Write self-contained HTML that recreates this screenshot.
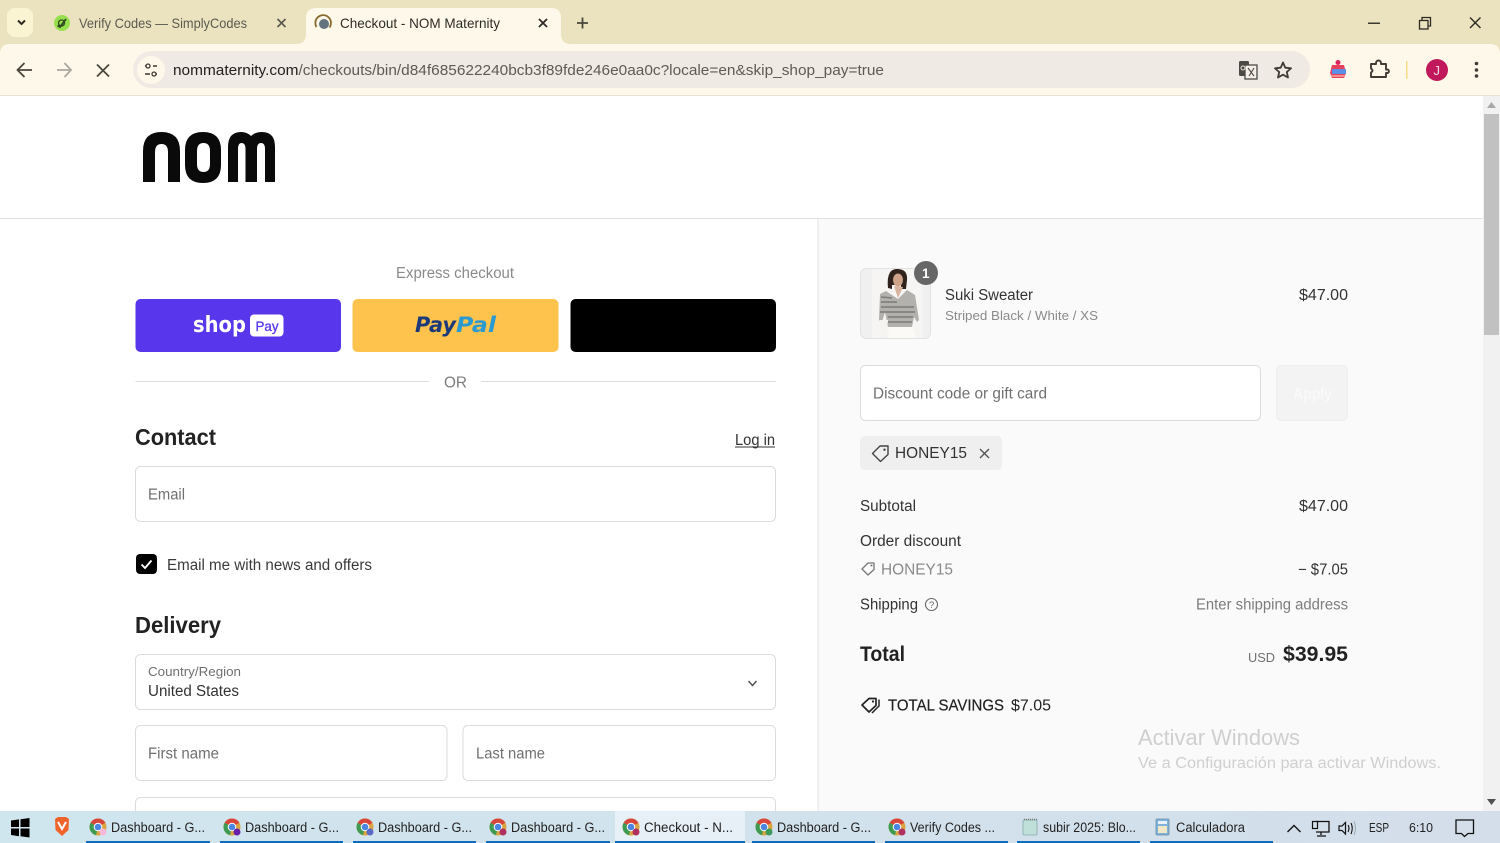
<!DOCTYPE html>
<html><head><meta charset="utf-8"><title>Checkout - NOM Maternity</title>
<style>
html,body{margin:0;padding:0;width:1500px;height:843px;overflow:hidden;background:#fff}
svg{display:block;filter:blur(.3px)}
text{font-family:"Liberation Sans",sans-serif;font-size:15px;fill:#333;white-space:pre}
</style></head><body>
<svg width="1500" height="843" viewBox="0 0 1500 843" xmlns="http://www.w3.org/2000/svg">
<defs>
<linearGradient id="tb" x1="0" x2="1" y1="0" y2="0"><stop offset="0" stop-color="#d0e6ef"/><stop offset="1" stop-color="#d3deea"/></linearGradient>
<g id="chrome"><circle cx="9" cy="9" r="8.5" fill="#d9a441"/><path d="M9 9L1.6 4.8A8.5 8.5 0 0 1 16.4 4.8Z" fill="#d8453a"/><path d="M9 9L1.6 4.8A8.5 8.5 0 0 0 7 17.3Z" fill="#3f9a52"/><circle cx="9" cy="9" r="4.300" fill="#fff"/><circle cx="9" cy="9" r="3.300" fill="#4a86e0"/></g>
</defs>

<!-- browser chrome -->
<rect width="1500" height="96" fill="#ebe3bf"/>
<path d="M0 96V54Q0 44 10 44H1490Q1500 44 1500 54V96Z" fill="#fdf8ea"/>
<rect y="95" width="1500" height="1" fill="#e6e2d8"/>
<rect x="7" y="8" width="26" height="29" rx="8" fill="#fbf4d2"/>
<path d="M18 20.500L21.500 24L25 20.500" fill="none" stroke="#2c2a22" stroke-width="2"/>
<circle cx="62" cy="23" r="8" fill="#97e04d"/>
<path d="M57.500 25.500L60 27L66 19" fill="none" stroke="#2f4a20" stroke-width="1.800"/><circle cx="61.500" cy="23" r="3" fill="none" stroke="#2f4a20" stroke-width="1.300"/>
<text x="79" y="28" textLength="168" lengthAdjust="spacingAndGlyphs" style="font-size:14px;fill:#5c5a50">Verify Codes — SimplyCodes</text>
<path d="M277.500 19L285.500 27M285.500 19L277.500 27" stroke="#59574e" stroke-width="1.600"/>
<path d="M296 44Q306 44 306 34V18Q306 8 316 8H551Q561 8 561 18V34Q561 44 571 44Z" fill="#fdf8ea"/>
<path d="M329.500 27.500A7.800 7.800 0 1 0 316.500 27" fill="none" stroke="#8a6a2c" stroke-width="1.800"/><circle cx="324" cy="24" r="5" fill="#65737e"/>
<text x="340" y="28" textLength="160" lengthAdjust="spacingAndGlyphs" style="font-size:14px;fill:#2e2c26">Checkout - NOM Maternity</text>
<path d="M539 19L547 27M547 19L539 27" stroke="#2e2c26" stroke-width="1.800"/>
<path d="M582.500 17.500V28.500M577 23H588" stroke="#47453c" stroke-width="1.800"/>
<rect x="1368" y="22.500" width="12" height="1.500" fill="#3a382f"/>
<rect x="1419.500" y="20.500" width="8.500" height="8.500" fill="none" stroke="#2c2a22" stroke-width="1.300"/><path d="M1422 20V17.500H1430.500V26H1428" fill="none" stroke="#2c2a22" stroke-width="1.300"/>
<path d="M1470 17.500L1480.500 28M1480.500 17.500L1470 28" stroke="#2c2a22" stroke-width="1.400"/>

<path d="M32 70H18M24.500 63L17.500 70L24.500 77" fill="none" stroke="#48463d" stroke-width="1.800"/>
<path d="M57 70H71M64.500 63L71 70L64.500 77" fill="none" stroke="#aaa89f" stroke-width="1.800"/>
<path d="M97 64.500L109 76.500M109 64.500L97 76.500" stroke="#48463d" stroke-width="1.800"/>
<rect x="133" y="51" width="1177" height="37" rx="18.500" fill="#efeae3"/>
<circle cx="151" cy="70" r="14" fill="#fdf8ea"/>
<path d="M145 66H150M153 66H157M145 74H150M153 74H157" stroke="#3a382f" stroke-width="1.500"/><circle cx="148" cy="66" r="2" fill="#fdf8ea" stroke="#3a382f" stroke-width="1.300"/><circle cx="154" cy="74" r="2" fill="#fdf8ea" stroke="#3a382f" stroke-width="1.300"/>
<text x="173" y="75" textLength="711" lengthAdjust="spacingAndGlyphs" style="font-size:15px;fill:#5d5b54"><tspan fill="#23211c">nommaternity.com</tspan>/checkouts/bin/d84f685622240bcb3f89fde246e0aa0c?locale=en&amp;skip_shop_pay=true</text>
<rect x="1239" y="61" width="10" height="15" rx="1.500" fill="#4b4a44"/><rect x="1245" y="65" width="12" height="14" fill="#f4efe7" stroke="#4b4a44" stroke-width="1.300"/><path d="M1248 68L1254 76M1254 68L1249 76" stroke="#4b4a44" stroke-width="1.100"/><circle cx="1243" cy="68" r="2" fill="none" stroke="#e8e4da" stroke-width="1"/>
<path d="M1283 62.500L1285.300 67.700L1291 68.300L1286.800 72L1288 77.500L1283 74.700L1278 77.500L1279.200 72L1275 68.300L1280.700 67.700Z" fill="none" stroke="#3f3d36" stroke-width="1.800" stroke-linejoin="round"/>
<path d="M1332 65H1344L1346 73L1344 78H1332L1330 73Z" fill="#e8415f"/><rect x="1332" y="69" width="14" height="5" fill="#5b8fe6"/><circle cx="1338" cy="62.500" r="2.500" fill="#e0245e"/><rect x="1331" y="75" width="14" height="2" fill="#f1908b"/>
<path d="M1371 64H1376V63A2.500 2.500 0 0 1 1381 63V64H1386V69.500H1387.500A1.800 1.800 0 0 1 1387.500 73H1386V77H1371V72.500Q1374 70.500 1371 68.500Z" fill="none" stroke="#3f3d36" stroke-width="1.900" stroke-linejoin="round"/>
<rect x="1406" y="61" width="1.500" height="18" fill="#f6dc8a"/>
<circle cx="1437" cy="70" r="11" fill="#c0185a"/>
<text x="1433.500" y="75" style="font-size:13px;fill:#f7d9e4">J</text>
<circle cx="1476.500" cy="63.500" r="1.800" fill="#3f3d36"/><circle cx="1476.500" cy="70" r="1.800" fill="#3f3d36"/><circle cx="1476.500" cy="76" r="1.800" fill="#3f3d36"/>

<!-- page backgrounds -->
<rect x="818" y="219" width="665" height="592" fill="#fafafa"/>
<rect x="0" y="218" width="1483" height="1" fill="#e1e1e1"/>
<rect x="817.500" y="219" width="1" height="592" fill="#e1e1e1"/>
<rect x="1483" y="96" width="17" height="715" fill="#f1f1f1"/>
<rect x="1484" y="114" width="15" height="221" fill="#c1c1c1"/>
<path d="M1491.500 102L1487 108H1496Z" fill="#a8a8a8"/>
<path d="M1491.500 805L1487 799H1496Z" fill="#505050"/>

<!-- logo -->
<path d="M143 182V151Q143 132 161.500 132Q180 132 180 151V182H168V152Q168 144 161.500 144Q155 144 155 152V182Z" fill="#0a0a0a"/>
<path fill-rule="evenodd" d="M185 150Q185 132 203 132Q221 132 221 150V165Q221 183 203 183Q185 183 185 165ZM197 151V164Q197 172 203.500 172Q210 172 210 164V151Q210 143 203.500 143Q197 143 197 151Z" fill="#0a0a0a"/>
<path d="M228 182V147Q228 132 241 132Q247 132 251 136Q255 132 262 132Q275 132 275 147V182H265V149Q265 143 261 143Q257 143 257 149V182H245.500V149Q245.500 143 241.500 143Q238 143 238 149V182Z" fill="#0a0a0a"/>

<!-- express -->
<text x="396" y="278" textLength="118" lengthAdjust="spacingAndGlyphs" style="font-size:15.500px;fill:#8a8a8a">Express checkout</text>
<rect x="135.500" y="299" width="205.500" height="53" rx="5" fill="#5836ec"/>
<rect x="352.500" y="299" width="206" height="53" rx="5" fill="#fec34d"/>
<rect x="570.500" y="299" width="205.500" height="53" rx="5" fill="#000"/>
<text x="193" y="332" textLength="53" lengthAdjust="spacingAndGlyphs" style="font-family:'DejaVu Sans',sans-serif;font-size:22px;font-weight:700;fill:#fff">shop</text>
<rect x="250" y="314.500" width="33.500" height="22" rx="4" fill="#fff"/>
<text x="255.500" y="331" textLength="23" lengthAdjust="spacingAndGlyphs" style="font-size:14px;fill:#5836ec;stroke:#5836ec;stroke-width:.3px">Pay</text>
<text x="415" y="332" textLength="41" lengthAdjust="spacingAndGlyphs" style="font-family:'DejaVu Sans',sans-serif;font-size:21px;font-weight:700;font-style:italic;fill:#1c3a7a">Pay</text>
<text x="456" y="332" textLength="40" lengthAdjust="spacingAndGlyphs" style="font-family:'DejaVu Sans',sans-serif;font-size:21px;font-weight:700;font-style:italic;fill:#2a9ad0">Pal</text>
<rect x="135.500" y="381" width="293.500" height="1" fill="#dedede"/>
<rect x="481" y="381" width="295" height="1" fill="#dedede"/>
<text x="444" y="387.500" textLength="23" lengthAdjust="spacingAndGlyphs" style="font-size:15.500px;fill:#7d7d7d">OR</text>

<!-- contact -->
<text x="135" y="445" textLength="81" lengthAdjust="spacingAndGlyphs" style="font-size:23px;font-weight:700;fill:#222">Contact</text>
<text x="735" y="445" textLength="40" lengthAdjust="spacingAndGlyphs" style="font-size:15.500px;fill:#333">Log in</text>
<rect x="735" y="446.500" width="40" height="1" fill="#333"/>
<rect x="135.500" y="466.500" width="640" height="55" rx="5" fill="#fff" stroke="#dcdcdc"/>
<text x="148" y="499.500" textLength="37" lengthAdjust="spacingAndGlyphs" style="font-size:15.500px;fill:#707070">Email</text>
<rect x="136" y="554" width="21" height="20" rx="4" fill="#000"/>
<path d="M141.500 564.500L145 568L151.500 560.500" fill="none" stroke="#fff" stroke-width="1.800"/>
<text x="167" y="570" textLength="205" lengthAdjust="spacingAndGlyphs" style="font-size:15.500px;fill:#3a3a3a">Email me with news and offers</text>

<!-- delivery -->
<text x="135" y="633" textLength="86" lengthAdjust="spacingAndGlyphs" style="font-size:23px;font-weight:700;fill:#222">Delivery</text>
<rect x="135.500" y="654.500" width="640" height="55" rx="5" fill="#fff" stroke="#dcdcdc"/>
<text x="148" y="676" textLength="93" lengthAdjust="spacingAndGlyphs" style="font-size:13px;fill:#707070">Country/Region</text>
<text x="148" y="696" textLength="91" lengthAdjust="spacingAndGlyphs" style="font-size:15.500px;fill:#333">United States</text>
<path d="M748.500 681L752.500 685.500L756.500 681" fill="none" stroke="#555" stroke-width="1.500"/>
<rect x="135.500" y="725.500" width="311.500" height="55" rx="5" fill="#fff" stroke="#dcdcdc"/>
<text x="148" y="758.500" textLength="71" lengthAdjust="spacingAndGlyphs" style="font-size:15.500px;fill:#707070">First name</text>
<rect x="463" y="725.500" width="312.500" height="55" rx="5" fill="#fff" stroke="#dcdcdc"/>
<text x="476" y="758.500" textLength="69" lengthAdjust="spacingAndGlyphs" style="font-size:15.500px;fill:#707070">Last name</text>
<rect x="135.500" y="797.500" width="640" height="30" rx="5" fill="#fff" stroke="#dcdcdc"/>

<!-- order summary -->
<rect x="860.500" y="268.500" width="70" height="70" rx="6" fill="#f0f0f0" stroke="#e2e2e2"/>
<rect x="872" y="269" width="51" height="69" fill="#f6f5f3"/>
<path d="M886 291L880 294L879 320L882 322L885 312L888 327H912L914 317L917 322L919 320L915 295L907 290L898 299Z" fill="#b3b1ae"/>
<path d="M881 297L892 298M881 302H897M881 307H914M880 312H915M888 317H913M888 322H912" stroke="#7d7b76" stroke-width="1.500"/>
<path d="M880 320H888L886 337H881Z" fill="#f5f4f0"/>
<path d="M889 327H913L916 338H888Z" fill="#fbfaf6"/>
<path d="M888 288Q886 269 897 269Q908 269 907 280L906 289H901V285H892V289Z" fill="#30231e"/>
<ellipse cx="898" cy="280" rx="5" ry="6.500" fill="#cfa38a"/>
<path d="M894 286L898 298L903 287Z" fill="#d8b4a0"/>
<circle cx="926" cy="273" r="12" fill="#666"/>
<text x="922" y="278" style="font-size:13.500px;font-weight:700;fill:#fff">1</text>
<text x="945" y="300" textLength="88" lengthAdjust="spacingAndGlyphs" style="font-size:15.500px;fill:#333">Suki Sweater</text>
<text x="945" y="320" textLength="153" lengthAdjust="spacingAndGlyphs" style="font-size:13px;fill:#8a8a8a">Striped Black / White / XS</text>
<text x="1299" y="300" textLength="49" lengthAdjust="spacingAndGlyphs" style="font-size:15.500px;fill:#333">$47.00</text>

<rect x="860.500" y="365.500" width="400" height="55" rx="5" fill="#fff" stroke="#dcdcdc"/>
<text x="873" y="398.500" textLength="174" lengthAdjust="spacingAndGlyphs" style="font-size:15.500px;fill:#707070">Discount code or gift card</text>
<rect x="1276.500" y="365.500" width="71" height="55" rx="5" fill="#f3f3f3" stroke="#eeeeee"/>
<text x="1293" y="399" textLength="39" lengthAdjust="spacingAndGlyphs" style="font-size:15.500px;font-weight:700;fill:#f9f9f9">Apply</text>

<rect x="860" y="436" width="142" height="34" rx="5" fill="#efefef"/>
<path d="M872.500 453.500L880 446H888V454.500L880.500 461.500Z" fill="none" stroke="#444" stroke-width="1.400" stroke-linejoin="round"/><circle cx="884.500" cy="449.700" r="1.200" fill="#444"/>
<text x="895" y="458" textLength="72" lengthAdjust="spacingAndGlyphs" style="font-size:15.500px;fill:#333">HONEY15</text>
<path d="M980 449L989 458M989 449L980 458" stroke="#555" stroke-width="1.400"/>

<text x="860" y="511" textLength="56" lengthAdjust="spacingAndGlyphs" style="font-size:15.500px;fill:#333">Subtotal</text>
<text x="1299" y="511" textLength="49" lengthAdjust="spacingAndGlyphs" style="font-size:15.500px;fill:#333">$47.00</text>
<text x="860" y="546" textLength="101" lengthAdjust="spacingAndGlyphs" style="font-size:15.500px;fill:#333">Order discount</text>
<path d="M862 569L868 563H874V569.500L868 575Z" fill="none" stroke="#777" stroke-width="1.300" stroke-linejoin="round"/><circle cx="871.500" cy="565.500" r="1" fill="#777"/>
<text x="881" y="574.500" textLength="72" lengthAdjust="spacingAndGlyphs" style="font-size:15.500px;fill:#8a8a8a">HONEY15</text>
<text x="1298" y="574.500" textLength="50" lengthAdjust="spacingAndGlyphs" style="font-size:15.500px;fill:#333">− $7.05</text>
<text x="860" y="609.500" textLength="58" lengthAdjust="spacingAndGlyphs" style="font-size:15.500px;fill:#333">Shipping</text>
<circle cx="931.500" cy="604.500" r="6" fill="none" stroke="#666" stroke-width="1.100"/>
<text x="929" y="608" style="font-size:9.500px;fill:#666">?</text>
<text x="1196" y="609.500" textLength="152" lengthAdjust="spacingAndGlyphs" style="font-size:15.500px;fill:#7d7d7d">Enter shipping address</text>
<text x="860" y="661" textLength="45" lengthAdjust="spacingAndGlyphs" style="font-size:21px;font-weight:700;fill:#222">Total</text>
<text x="1248" y="662" textLength="27" lengthAdjust="spacingAndGlyphs" style="font-size:12.500px;fill:#707070">USD</text>
<text x="1283" y="661" textLength="65" lengthAdjust="spacingAndGlyphs" style="font-size:21px;font-weight:700;fill:#222">$39.95</text>
<path d="M862 705L869 698.500H876V705.500L869 712Z" fill="none" stroke="#222" stroke-width="1.700" stroke-linejoin="round"/><path d="M879 699.500V706L872 713" fill="none" stroke="#222" stroke-width="1.500"/><circle cx="873" cy="701.500" r="1.100" fill="#222"/>
<text x="888" y="710.500" textLength="116" lengthAdjust="spacingAndGlyphs" style="font-size:15.500px;fill:#222;stroke:#222;stroke-width:.2px">TOTAL SAVINGS</text>
<text x="1011" y="710.500" textLength="40" lengthAdjust="spacingAndGlyphs" style="font-size:15.500px;fill:#222">$7.05</text>

<text x="1138" y="745" textLength="162" lengthAdjust="spacingAndGlyphs" style="font-size:22px;fill:#cfcfcf">Activar Windows</text>
<text x="1138" y="768" textLength="303" lengthAdjust="spacingAndGlyphs" style="font-size:15.500px;fill:#cfcfcf">Ve a Configuración para activar Windows.</text>

<!-- taskbar -->
<rect y="811" width="1500" height="32" fill="url(#tb)"/>
<path d="M11 820.500L19 819.400V827H11ZM20.500 819.200L29.500 818V827H20.500ZM11 828.500H19V836.200L11 835ZM20.500 828.500H29.500V837.500L20.500 836.300Z" fill="#000"/>
<path d="M55 819L58 817H66L69 819L68.500 830L62 836L55.500 830Z" fill="#f0642c"/><path d="M58 822L62 829L66 822" fill="none" stroke="#fff" stroke-width="2"/>

<g fill="#0f6cbd">
<rect x="86" y="841" width="124" height="2"/><rect x="220" y="841" width="123" height="2"/><rect x="353" y="841" width="123" height="2"/><rect x="486" y="841" width="124" height="2"/><rect x="752" y="841" width="123" height="2"/><rect x="885" y="841" width="123" height="2"/><rect x="1017" y="841" width="123" height="2"/><rect x="1150" y="841" width="123" height="2"/>
</g>
<rect x="615" y="811" width="130" height="32" fill="#e6f0f6"/><rect x="615" y="841" width="130" height="2" fill="#0f6cbd"/>

<use href="#chrome" x="89" y="818"/><circle cx="103" cy="832" r="3.500" fill="#f5b8d8"/>
<text x="111" y="832" textLength="94" lengthAdjust="spacingAndGlyphs" style="font-size:13.500px;fill:#222">Dashboard - G...</text>
<use href="#chrome" x="223" y="818"/><circle cx="237" cy="832" r="3.500" fill="#6a1fa8"/>
<text x="245" y="832" textLength="94" lengthAdjust="spacingAndGlyphs" style="font-size:13.500px;fill:#222">Dashboard - G...</text>
<use href="#chrome" x="356" y="818"/><circle cx="370" cy="832" r="3.500" fill="#5a68c8"/>
<text x="378" y="832" textLength="94" lengthAdjust="spacingAndGlyphs" style="font-size:13.500px;fill:#222">Dashboard - G...</text>
<use href="#chrome" x="489" y="818"/><circle cx="503" cy="832" r="3.500" fill="#b03060"/>
<text x="511" y="832" textLength="94" lengthAdjust="spacingAndGlyphs" style="font-size:13.500px;fill:#222">Dashboard - G...</text>
<use href="#chrome" x="622" y="818"/><circle cx="636" cy="832" r="3.500" fill="#b03060"/>
<text x="644" y="832" textLength="89" lengthAdjust="spacingAndGlyphs" style="font-size:13.500px;fill:#222">Checkout - N...</text>
<use href="#chrome" x="755" y="818"/><circle cx="769" cy="832" r="3.500" fill="#3a9a5a"/>
<text x="777" y="832" textLength="94" lengthAdjust="spacingAndGlyphs" style="font-size:13.500px;fill:#222">Dashboard - G...</text>
<use href="#chrome" x="888" y="818"/><circle cx="902" cy="832" r="3.500" fill="#b03060"/>
<text x="910" y="832" textLength="85" lengthAdjust="spacingAndGlyphs" style="font-size:13.500px;fill:#222">Verify Codes ...</text>
<rect x="1023" y="820" width="14" height="15" rx="1" fill="#bfe0d8" stroke="#8aa" stroke-width="0.800"/><path d="M1024 819.500H1037" stroke="#777" stroke-width="1.500" stroke-dasharray="1 1"/>
<text x="1043" y="832" textLength="93" lengthAdjust="spacingAndGlyphs" style="font-size:13.500px;fill:#222">subir 2025: Blo...</text>
<rect x="1156" y="819" width="13" height="16" rx="1" fill="#7fb2d8" stroke="#6b8ea8" stroke-width="0.800"/><rect x="1158" y="821" width="9" height="3" fill="#e8f2f8"/><rect x="1158" y="826" width="9" height="7" fill="#f0e6c8"/>
<text x="1176" y="832" textLength="69" lengthAdjust="spacingAndGlyphs" style="font-size:13.500px;fill:#222">Calculadora</text>

<path d="M1287.500 832L1294 825.500L1300.500 832" fill="none" stroke="#111" stroke-width="1.400"/>
<path d="M1316 821.500H1329V832H1316M1321 832V835M1317 836H1326" fill="none" stroke="#111" stroke-width="1.300"/><rect x="1312.500" y="821.500" width="5" height="7" fill="#d2e0ea" stroke="#111" stroke-width="1.200"/>
<path d="M1339 826H1342L1345.500 822.500V834L1342 830.500H1339Z" fill="none" stroke="#111" stroke-width="1.200"/><path d="M1348 825Q1350 828 1348 832M1351 823Q1353.500 828 1351 834" fill="none" stroke="#111" stroke-width="1.100"/><path d="M1354 821.500Q1357 828 1354 835" fill="none" stroke="#9aa" stroke-width="1"/>
<text x="1369" y="832" textLength="20" lengthAdjust="spacingAndGlyphs" style="font-size:12.500px;fill:#222">ESP</text>
<text x="1409" y="832" textLength="24" lengthAdjust="spacingAndGlyphs" style="font-size:12.500px;fill:#222">6:10</text>
<path d="M1456 820H1473.500V833.500H1468L1464.500 836.500L1461.500 833.500H1456Z" fill="none" stroke="#111" stroke-width="1.300"/>
</svg>
</body></html>
